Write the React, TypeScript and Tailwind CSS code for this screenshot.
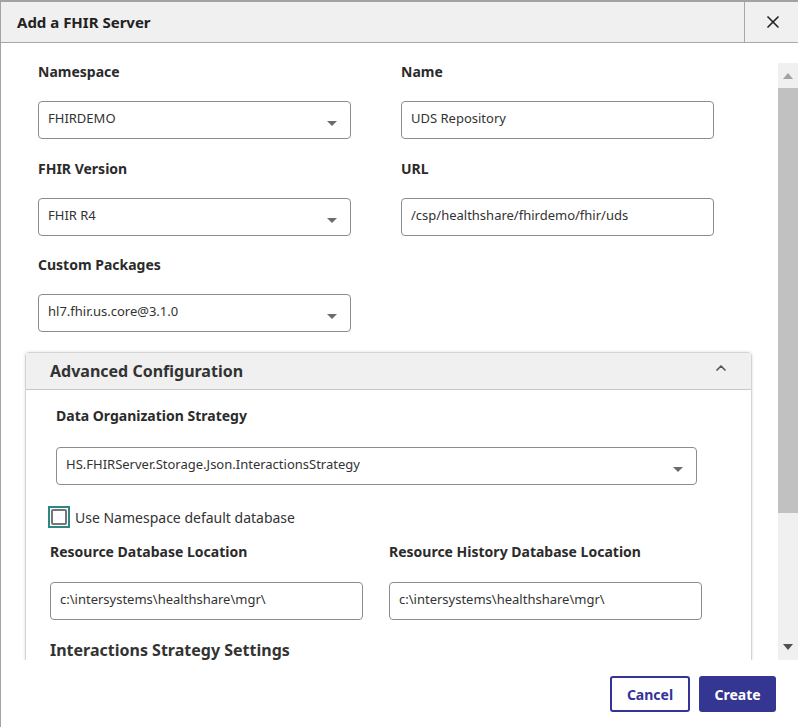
import { X, ChevronUp } from 'lucide-react';

const font = { fontFamily: '"Noto Sans", "Open Sans", sans-serif' };

function Caret() {
  return (
    <svg width="10" height="6" viewBox="0 0 10 6" className="shrink-0">
      <path d="M0 0 L10 0 L5 5 Z" fill="#6b6b6b" />
    </svg>
  );
}

function Select({ value, className = '' }: { value: string; className?: string }) {
  return (
    <div className={`h-[38px] border border-[#8c8c8c] rounded-[4px] flex items-start justify-between pl-[9px] pr-[13px] bg-white ${className}`}>
      <span className="text-[13px] leading-[18px] pt-[7px] text-[#333]">{value}</span>
      <span className="pt-[19px]"><Caret /></span>
    </div>
  );
}

function TextInput({ value, className = '' }: { value: string; className?: string }) {
  return (
    <div className={`h-[38px] border border-[#8c8c8c] rounded-[4px] pl-[9px] bg-white ${className}`}>
      <span className="text-[13px] leading-[18px] pt-[7px] block text-[#333]">{value}</span>
    </div>
  );
}

function Label({ children, className = '' }: { children: React.ReactNode; className?: string }) {
  return <div className={`text-[14px] leading-[20px] font-bold text-[#2b2b2b] ${className}`}>{children}</div>;
}

export default function App() {
  return (
    <div className="w-[798px] h-[727px] bg-[#1c1c5c] overflow-hidden" style={font}>
      <div className="w-full h-full bg-white border-t-2 border-l border-[#a3a3a3] flex flex-col">
        {/* Header */}
        <div className="h-[41px] bg-[#f0f0f0] border-b border-[#a8a8a8] flex items-stretch shrink-0">
          <div className="flex-1 pl-[16px] flex items-center text-[15px] font-bold text-[#222]">Add a FHIR Server</div>
          <div className="w-[54px] border-l border-[#a8a8a8] flex items-center justify-center pl-[3px]">
            <X className="w-[20px] h-[20px] text-[#222]" strokeWidth={2} />
          </div>
        </div>

        {/* Scrollable body */}
        <div className="h-[617px] flex shrink-0 overflow-hidden">
          <div className="flex-1 overflow-hidden pt-[19px]">
            <div className="pl-[37px] grid grid-cols-[313px_313px] gap-x-[50px]">
              <div>
                <Label>Namespace</Label>
                <Select value="FHIRDEMO" className="mt-[19px]" />
              </div>
              <div>
                <Label>Name</Label>
                <TextInput value="UDS Repository" className="mt-[19px]" />
              </div>
              <div className="mt-[20px]">
                <Label>FHIR Version</Label>
                <Select value="FHIR R4" className="mt-[19px]" />
              </div>
              <div className="mt-[20px]">
                <Label>URL</Label>
                <TextInput value="/csp/healthshare/fhirdemo/fhir/uds" className="mt-[19px]" />
              </div>
              <div className="mt-[19px]">
                <Label>Custom Packages</Label>
                <Select value="hl7.fhir.us.core@3.1.0" className="mt-[19px]" />
              </div>
            </div>

            {/* Advanced Configuration */}
            <div className="ml-[24px] w-[727px] mt-[20px] border border-[#d4d4d4] rounded-t-[4px] shadow-[0_0_3px_rgba(0,0,0,0.15)]">
              <div className="h-[37px] bg-[#f0f0f0] border-b border-[#c8c8c8] flex items-center justify-between pl-[24px] pr-[22px]">
                <span className="text-[16px] font-bold text-[#333]">Advanced Configuration</span>
                <ChevronUp className="w-[16px] h-[16px] text-[#555] -mt-[6px]" strokeWidth={2.5} />
              </div>
              <div className="pt-[16px] pb-[20px]">
                <Label className="ml-[30px]">Data Organization Strategy</Label>
                <Select value="HS.FHIRServer.Storage.Json.InteractionsStrategy" className="ml-[30px] w-[641px] mt-[21px]" />
                <div className="flex items-center mt-[21px] ml-[22px]">
                  <div className="w-[22px] h-[22px] border-2 border-[#2f8783] p-[1px]">
                    <div className="w-full h-full border-2 border-[#767676] rounded-[2px]" />
                  </div>
                  <span className="ml-[5px] text-[14px] text-[#333]">Use Namespace default database</span>
                </div>
                <div className="ml-[24px] mt-[14px] grid grid-cols-[313px_313px] gap-x-[26px]">
                  <div>
                    <Label>Resource Database Location</Label>
                    <TextInput value="c:\intersystems\healthshare\mgr\" className="mt-[20px]" />
                  </div>
                  <div>
                    <Label>Resource History Database Location</Label>
                    <TextInput value="c:\intersystems\healthshare\mgr\" className="mt-[20px]" />
                  </div>
                </div>
                <div className="ml-[24px] mt-[18px] text-[16px] leading-[24px] font-bold text-[#333]">Interactions Strategy Settings</div>
                <div className="h-[200px]" />
              </div>
            </div>
          </div>

          {/* Scrollbar */}
          <div className="w-[20px] mt-[20px] bg-[#f0f0f0] flex flex-col">
            <div className="h-[25px] flex items-center justify-center">
              <svg width="10" height="6" viewBox="0 0 10 6"><path d="M0 6 L10 6 L5 0 Z" fill="#a3a3a3" /></svg>
            </div>
            <div className="h-[425px] bg-[#c1c1c1]" />
            <div className="flex-1" />
            <div className="h-[27px] flex items-center justify-center">
              <svg width="10" height="6" viewBox="0 0 10 6"><path d="M0 0 L10 0 L5 6 Z" fill="#505050" /></svg>
            </div>
          </div>
        </div>

        {/* Footer */}
        <div className="flex-1 flex justify-end items-start gap-[9px] pt-[16px] pr-[22px]">
          <button className="w-[80px] h-[36px] border-2 border-[#333399] rounded-[3px] text-[14px] font-bold text-[#333399] bg-white">Cancel</button>
          <button className="w-[77px] h-[36px] rounded-[3px] text-[14px] font-bold text-white bg-[#353592]">Create</button>
        </div>
      </div>
    </div>
  );
}
